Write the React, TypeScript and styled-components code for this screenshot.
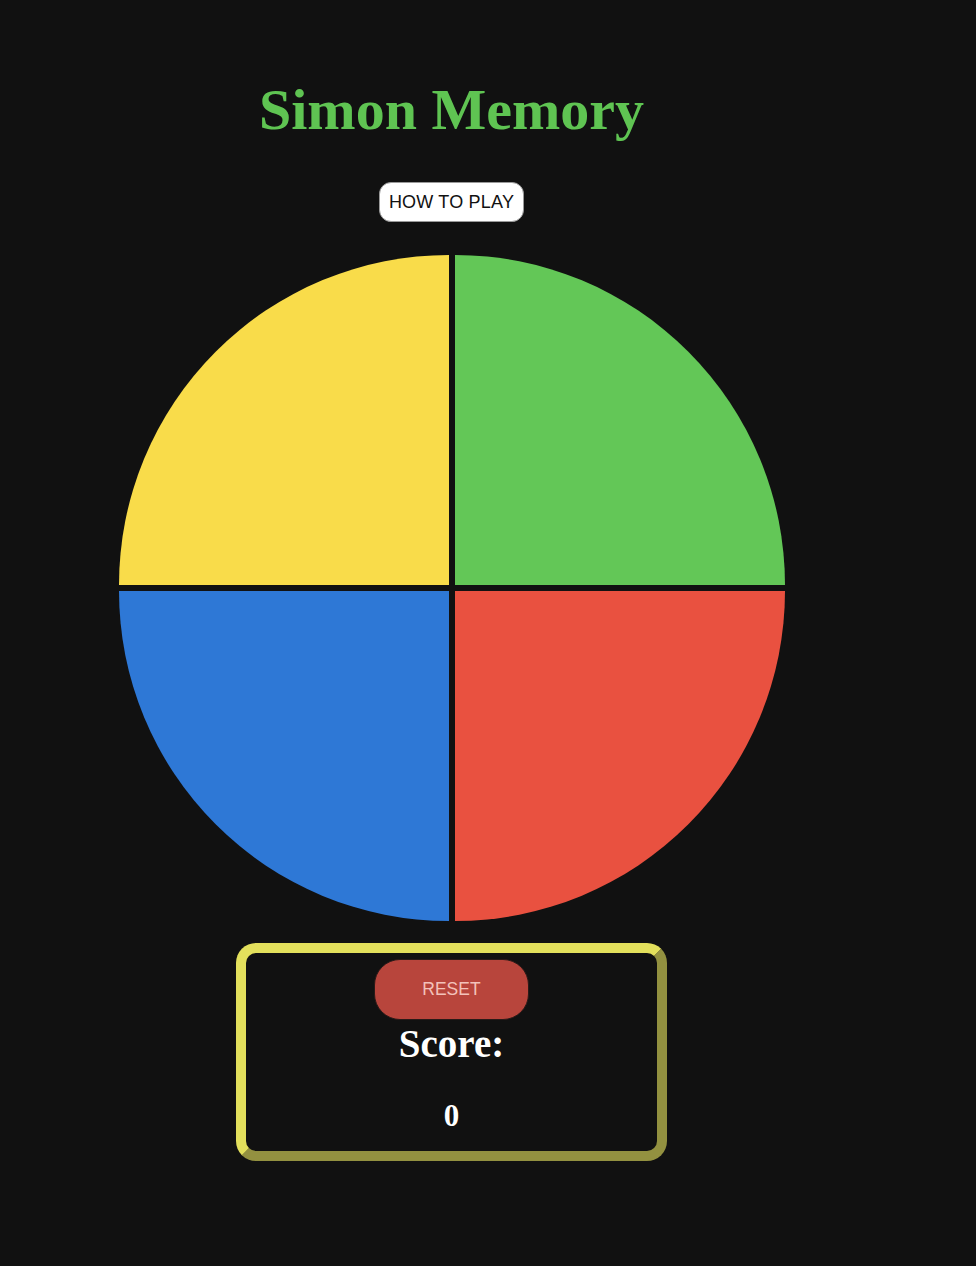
import * as React from "react";
import styled, { createGlobalStyle } from "styled-components";

const GlobalStyle = createGlobalStyle`
  body {
    margin: 0;
    background-color: #111111;
  }
`;

const colors: Record<string, string> = {
  yellow: "#f9dc4a",
  green: "#63c757",
  blue: "#2e78d6",
  red: "#e95140",
};

const corners: Record<string, string> = {
  yellow: "330px 0 0 0",
  green: "0 330px 0 0",
  blue: "0 0 0 330px",
  red: "0 0 330px 0",
};

export default function App() {
  return (
    <>
      <GlobalStyle />
      <Page>
        <Title>Simon Memory</Title>
        <HowTo>HOW TO PLAY</HowTo>
        <Board>
          {["yellow", "green", "blue", "red"].map((c) => (
            <Pad key={c} $color={c} />
          ))}
        </Board>
        <ScoreBox>
          <ResetButton>RESET</ResetButton>
          <ScoreLabel>Score:</ScoreLabel>
          <ScoreValue>0</ScoreValue>
        </ScoreBox>
      </Page>
    </>
  );
}

const Page = styled.div`
  width: 903px;
  display: flex;
  flex-direction: column;
  align-items: center;
  padding-top: 81px;
  padding-bottom: 100px;
`;

const Title = styled.h1`
  margin: 0;
  font-family: "Liberation Serif", "Times New Roman", serif;
  font-weight: bold;
  font-size: 58px;
  line-height: 1;
  color: #5fc452;
`;

const HowTo = styled.button`
  margin-top: 43px;
  width: 145px;
  height: 40px;
  padding: 0;
  background: #ffffff;
  border: 1px solid #9a9a9a;
  border-radius: 12px;
  font-family: "Liberation Sans", Arial, sans-serif;
  font-size: 18px;
  letter-spacing: 0.2px;
  color: #111111;
  cursor: pointer;
`;

const Board = styled.div`
  margin-top: 33px;
  display: grid;
  grid-template-columns: 330px 330px;
  grid-template-rows: 330px 330px;
  gap: 6px;
`;

const Pad = styled.div<{ $color: string }>`
  background-color: ${(p) => colors[p.$color]};
  border-radius: ${(p) => corners[p.$color]};
  cursor: pointer;
`;

const ScoreBox = styled.div`
  margin-top: 22px;
  box-sizing: border-box;
  width: 431px;
  height: 218px;
  padding-top: 6px;
  border: 10px solid;
  border-color: #e3e05c #939140 #939140 #e3e05c;
  border-radius: 20px;
  background: #111111;
  display: flex;
  flex-direction: column;
  align-items: center;
`;

const ResetButton = styled.button`
  width: 155px;
  height: 61px;
  background-color: #b8453c;
  border: 1px solid #2a1a18;
  border-radius: 26px;
  color: #f3c2ba;
  font-family: "Liberation Sans", Arial, sans-serif;
  font-size: 17.5px;
  cursor: pointer;
`;

const ScoreLabel = styled.h2`
  margin: 4px 0 0;
  font-family: "Liberation Serif", "Times New Roman", serif;
  font-weight: bold;
  font-size: 39px;
  line-height: 1;
  color: #ffffff;
`;

const ScoreValue = styled.h2`
  margin: 37px 0 0;
  font-family: "Liberation Serif", "Times New Roman", serif;
  font-weight: bold;
  font-size: 31px;
  line-height: 1;
  color: #ffffff;
`;
